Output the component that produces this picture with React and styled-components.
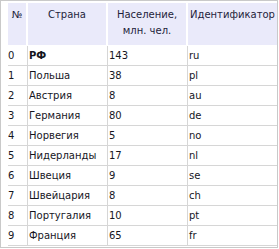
import React from 'react';
import styled, { createGlobalStyle } from 'styled-components';

const GlobalStyle = createGlobalStyle`
  html, body {
    margin: 0;
    padding: 0;
    background: #fff;
  }
  body {
    font-family: 'DejaVu Sans', 'Noto Sans', sans-serif;
    font-size: 10px;
    color: #16161e;
  }
`;

const Frame = styled.div`
  width: 278px;
  height: 248px;
  box-sizing: border-box;
  border: 1px solid #c9c9c9;
  overflow: hidden;
  padding: 2px 0 0 7px;
  background: #fff;
`;

const Table = styled.table`
  border-collapse: separate;
  border-spacing: 0;
  table-layout: fixed;
  width: 269px;
`;

const HeadCell = styled.th`
  background: #eaeafa;
  font-weight: normal;
  text-align: center;
  vertical-align: top;
  line-height: 16px;
  padding: 4px 1px 0 1px;
  height: 38px;
  border-right: 2px solid #fff;
  border-bottom: 1px solid #fff;
  color: #1e1e3a;
  &:last-child {
    border-right: none;
  }
`;

const Cell = styled.td`
  padding: 0 0 0 ${p => (p.$first ? 0 : 1)}px;
  height: 19px;
  line-height: 14px;
  vertical-align: middle;
  white-space: nowrap;
  overflow: hidden;
  font-weight: ${p => (p.$bold ? 'bold' : 'normal')};
  border-right: 1px solid #d6d6d6;
  border-bottom: 1px solid #d6d6d6;
  &:last-child {
    border-right: none;
  }
`;

const rows = [
  ['0', 'РФ', '143', 'ru', true],
  ['1', 'Польша', '38', 'pl'],
  ['2', 'Австрия', '8', 'au'],
  ['3', 'Германия', '80', 'de'],
  ['4', 'Норвегия', '5', 'no'],
  ['5', 'Нидерланды', '17', 'nl'],
  ['6', 'Швеция', '9', 'se'],
  ['7', 'Швейцария', '8', 'ch'],
  ['8', 'Португалия', '10', 'pt'],
  ['9', 'Франция', '65', 'fr'],
];

export default function App() {
  return (
    <>
      <GlobalStyle />
      <Frame>
        <Table>
          <colgroup>
            <col style={{ width: 20 }} />
            <col style={{ width: 80 }} />
            <col style={{ width: 80 }} />
            <col style={{ width: 89 }} />
          </colgroup>
          <thead>
            <tr>
              <HeadCell>№</HeadCell>
              <HeadCell>Страна</HeadCell>
              <HeadCell>Население, млн. чел.</HeadCell>
              <HeadCell>Идентификатор</HeadCell>
            </tr>
          </thead>
          <tbody>
            {rows.map(([n, country, pop, id, bold]) => (
              <tr key={n}>
                <Cell $first>{n}</Cell>
                <Cell $bold={bold}>{country}</Cell>
                <Cell>{pop}</Cell>
                <Cell>{id}</Cell>
              </tr>
            ))}
          </tbody>
        </Table>
      </Frame>
    </>
  );
}
